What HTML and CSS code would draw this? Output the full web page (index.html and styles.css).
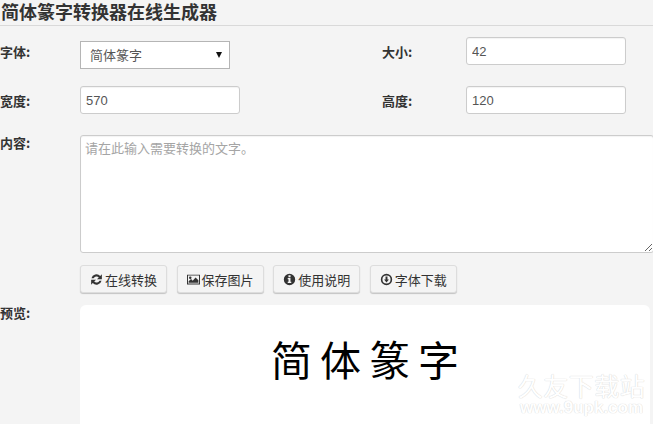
FILE: index.html
```html
<!DOCTYPE html>
<html lang="zh">
<head>
<meta charset="utf-8">
<title>简体篆字转换器在线生成器</title>
<link rel="stylesheet" href="styles.css">
</head>
<body>
<h1 class="title">简体篆字转换器在线生成器</h1>
<form class="form">
  <label class="label">字体:</label>
  <div class="select"><span>简体篆字</span><i class="caret"></i></div>
  <span></span>
  <label class="label">大小:</label>
  <input class="input" value="42">

  <label class="label">宽度:</label>
  <input class="input" value="570">
  <span></span>
  <label class="label">高度:</label>
  <input class="input" value="120">

  <label class="label label-top">内容:</label>
  <div class="wide">
    <textarea class="textarea" placeholder="请在此输入需要转换的文字。"></textarea>
    <div class="buttons">
      <button type="button" class="btn"><svg class="icon" viewBox="0 0 16 16"><path d="M1.8 6.6A6.4 6.4 0 0 1 12.6 3.6L14.6 1.6V7.6H8.6L10.8 5.4A3.9 3.9 0 0 0 4.4 6.6ZM14.2 9.4A6.4 6.4 0 0 1 3.4 12.4L1.4 14.4V8.4H7.4L5.2 10.6A3.9 3.9 0 0 0 11.6 9.4Z"/></svg>在线转换</button>
      <button type="button" class="btn"><svg class="icon" viewBox="0 0 16 14"><path fill-rule="evenodd" d="M0 1H16V13H0ZM1.2 2.2V11.8H14.8V2.2Z"/><circle cx="4" cy="4.8" r="1.5"/><path d="M2 11V9L5 6.5 7 8.5 10.5 4.5 14 8V11Z"/></svg>保存图片</button>
      <button type="button" class="btn"><svg class="icon" viewBox="0 0 16 16"><path fill-rule="evenodd" d="M8 1A7 7 0 1 1 8 15 7 7 0 0 1 8 1ZM6.7 2.9V5.2H9.3V2.9ZM5.8 6.3V7.7H6.8V10.8H5.8V12.2H10.2V10.8H9.2V6.3Z"/></svg>使用说明</button>
      <button type="button" class="btn"><svg class="icon" viewBox="0 0 16 16"><path fill-rule="evenodd" d="M8 1A7 7 0 1 1 8 15 7 7 0 0 1 8 1ZM8 3A5 5 0 1 0 8 13 5 5 0 0 0 8 3ZM6.8 4.2H9.2V8H11L8 11.6 5 8H6.8Z"/></svg>字体下载</button>
    </div>
  </div>

  <label class="label label-top">预览:</label>
  <div class="preview"><span class="seal">简体篆字</span></div>
</form>
<div class="watermark"><span class="wm-cn">久友下载站</span><span class="wm-en">www.9upk.com</span></div>
</body>
</html>
```

FILE: styles.css
```css
* { box-sizing: border-box; }
html, body { margin: 0; height: 424px; overflow: hidden; }
body {
  background: #f4f4f4;
  color: #333;
  font-family: "Liberation Sans", "Noto Sans CJK SC", sans-serif;
  font-size: 13px;
  position: relative;
}
.title {
  margin: 0;
  height: 26px;
  padding-left: 1px;
  border-bottom: 1px solid #d9d9d9;
  font-size: 18px;
  line-height: 22px;
  font-weight: 700;
  color: #333;
  font-family: "Noto Sans CJK SC", sans-serif;
}
.form {
  display: grid;
  grid-template-columns: 80px 160px 142px 84px 1fr;
  row-gap: 21px;
  padding-top: 11px;
  width: 654px;
}
.label {
  font-family: "Noto Sans CJK SC", sans-serif;
  font-weight: 700;
  font-size: 13px;
  line-height: 18px;
  padding-top: 6px;
  color: #333;
}
.label-top { padding-top: 0; margin-top: -1px; }
.select {
  margin-top: 4px;
  margin-bottom: -4px;
  width: 150px;
  height: 28px;
  background: #fff;
  border: 1px solid #b5b5b5;
  display: flex;
  align-items: center;
  justify-content: space-between;
  padding: 0 7px 2px 9px;
  color: #555;
  font-family: "Noto Sans CJK SC", sans-serif;
  font-size: 13px;
}
.caret {
  width: 0;
  height: 0;
  margin-top: 1px;
  border-left: 3.5px solid transparent;
  border-right: 3.5px solid transparent;
  border-top: 6px solid #111;
}
.input {
  width: 160px;
  height: 28px;
  padding: 0 5px;
  background: #fff;
  border: 1px solid #ccc;
  border-radius: 3px;
  color: #555;
  font-family: "Liberation Sans", sans-serif;
  font-size: 13px;
  box-shadow: inset 0 1px 1px rgba(0, 0, 0, .05);
}
.wide { grid-column: 2 / -1; }
.textarea {
  display: block;
  width: 574px;
  height: 118px;
  padding: 2px 4px;
  background: #fff;
  border: 1px solid #ccc;
  border-radius: 3px;
  font-family: "Noto Sans CJK SC", sans-serif;
  font-size: 13px;
  box-shadow: inset 0 1px 1px rgba(0, 0, 0, .05);
}
.textarea::placeholder { color: #a5a5a5; }
.buttons {
  display: flex;
  gap: 9.6px;
  margin-top: 12px;
  margin-bottom: -9px;
}
.btn {
  width: 87px;
  height: 28px;
  padding: 0;
  display: flex;
  align-items: center;
  justify-content: center;
  gap: 2px;
  background: #f4f4f4;
  border: 1px solid #ddd;
  border-radius: 3px;
  box-shadow: 0 1px 1px rgba(0, 0, 0, .2);
  color: #333;
  font-family: "Noto Sans CJK SC", sans-serif;
  font-size: 13px;
}
.icon { width: 13px; height: 13px; fill: #333; flex: none; }
.preview {
  width: 570px;
  height: 130px;
  background: #fff;
  border-radius: 6px;
  display: flex;
  justify-content: center;
  padding: 26px 0 0 8px;
}
.seal {
  font-family: "Noto Sans CJK SC", sans-serif;
  font-size: 41px;
  line-height: 54px;
  letter-spacing: 8px;
  color: #000;
  height: 54px;
}
.watermark {
  position: absolute;
  left: 517px;
  top: 371px;
  width: 129px;
  display: flex;
  flex-direction: column;
  align-items: center;
  color: #fff;
  text-shadow: 0 0 1px #d8d8d8, 0 0 1px #d8d8d8;
  font-family: "Noto Sans CJK SC", sans-serif;
}
.wm-cn { font-size: 25px; line-height: 28px; letter-spacing: .5px; white-space: nowrap; }
.wm-en { font-size: 17px; line-height: 15px; margin-top: 1px; font-weight: 700; font-family: "Liberation Sans", sans-serif; white-space: nowrap; }
```
